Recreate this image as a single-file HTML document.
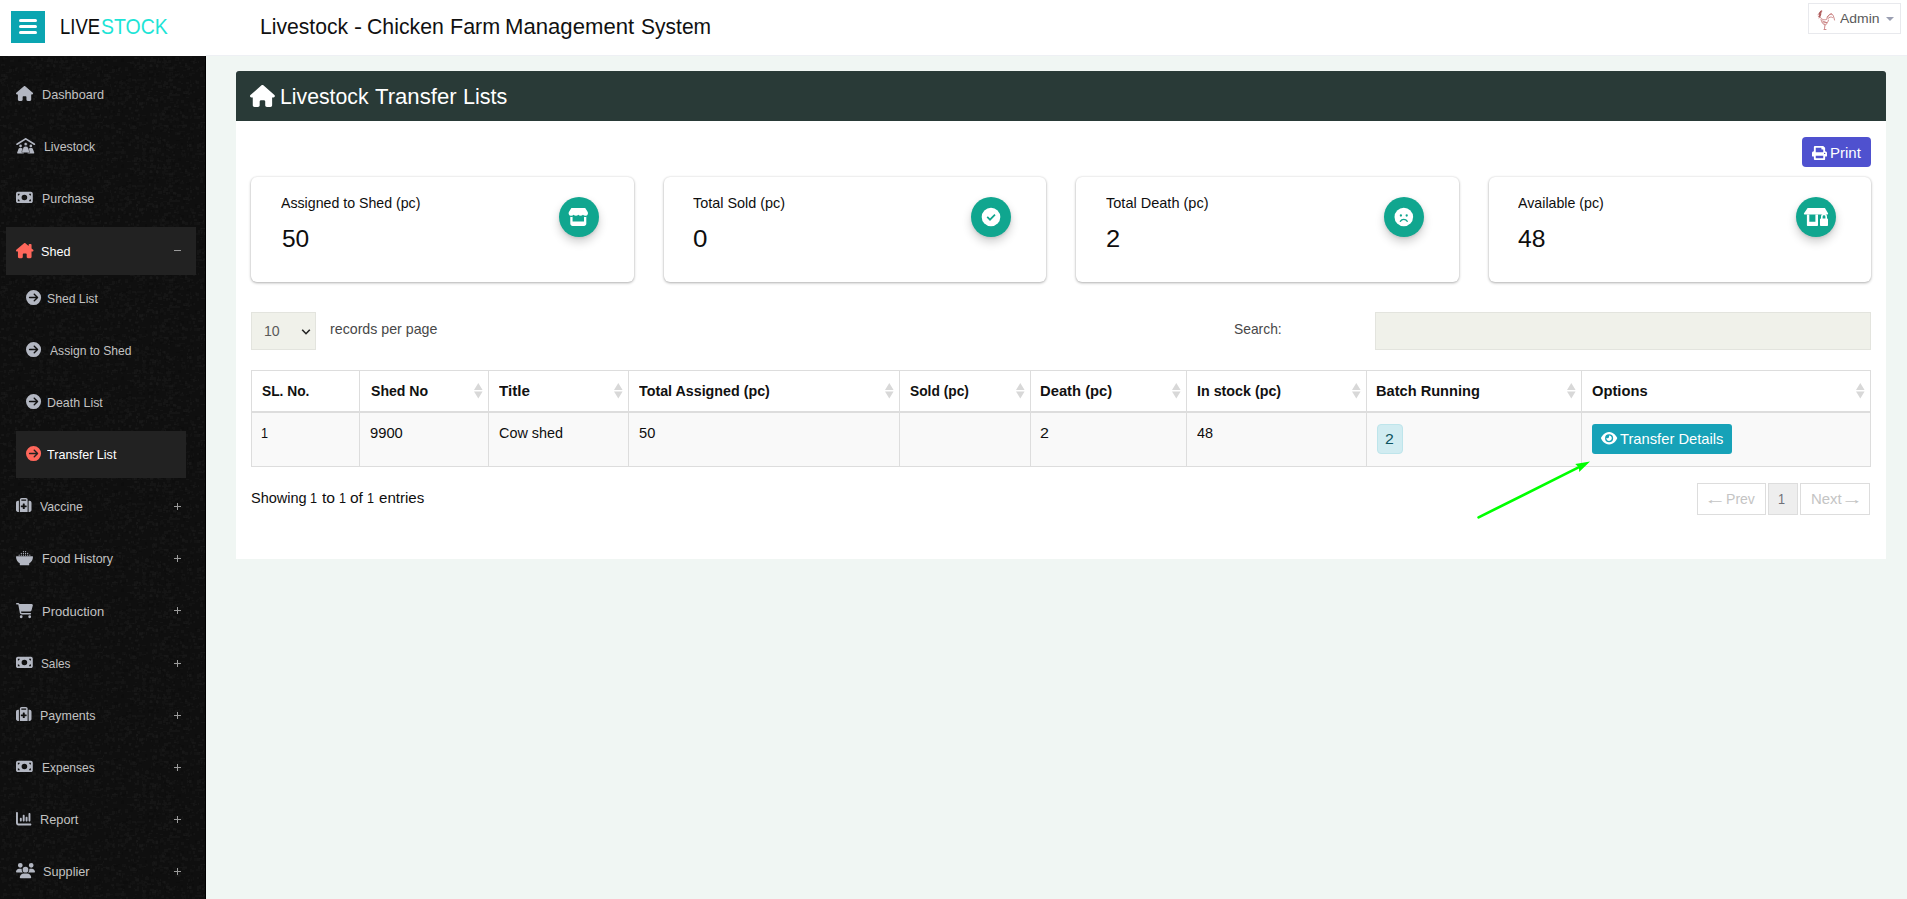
<!DOCTYPE html>
<html lang="en"><head><meta charset="utf-8"><title>Livestock - Chicken Farm Management System</title>
<style>
*{margin:0;padding:0}
html,body{width:1907px;height:899px;overflow:hidden;background:#f0f6f3;font-family:"Liberation Sans",sans-serif}
ul{list-style:none}
table,thead,tbody,tr,th,td,li,ul,nav,main,header,section,article{display:block;position:static}
.abs,.ic,.t{position:absolute;display:block}
.abs .abs{position:absolute}
.t{white-space:pre;transform-origin:0 0;line-height:20px;font-weight:400;font-family:"Liberation Sans",sans-serif}
.ic{overflow:visible}
</style></head>
<body>
<header>
<div class="abs" style="left:0px;top:0px;width:1907px;height:55px;background:#fff"></div>
<div class="abs" style="left:0px;top:55px;width:1907px;height:1px;background:#fff"></div>
<div class="abs" style="left:206px;top:55px;width:1701px;height:1px;background:#eef0f4"></div>
<div class="abs" style="left:11px;top:11px;width:34px;height:32px;background:#0ba5b1"><div class="abs" style="left:8px;top:8px;width:18px;height:3px;background:#fff;border-radius:1.5px"></div><div class="abs" style="left:8px;top:14px;width:18px;height:3px;background:#fff;border-radius:1.5px"></div><div class="abs" style="left:8px;top:20px;width:18px;height:3px;background:#fff;border-radius:1.5px"></div></div>
<div class="brand"><span class="t" style="left:60.19px;top:16.80px;font-size:21.4px;transform:scaleX(0.8627);color:#0d0d0d;">LIVE</span><span class="t" style="left:100.52px;top:16.80px;font-size:21.4px;transform:scaleX(0.9100);color:#1de4d6;">STOCK</span></div>
<h1><span class="t" style="left:259.77px;top:17.10px;font-size:21.5px;transform:scaleX(0.9831);color:#111;">Livestock</span> <span class="t" style="left:354.24px;top:17.10px;font-size:21.5px;transform:scaleX(1.1200);color:#111;">-</span> <span class="t" style="left:366.92px;top:17.10px;font-size:21.5px;transform:scaleX(0.9882);color:#111;">Chicken</span> <span class="t" style="left:449.54px;top:17.10px;font-size:21.5px;transform:scaleX(1.0005);color:#111;">Farm</span> <span class="t" style="left:504.88px;top:17.10px;font-size:21.5px;transform:scaleX(1.0294);color:#111;">Management</span> <span class="t" style="left:641.04px;top:17.10px;font-size:21.5px;transform:scaleX(0.9785);color:#111;">System</span></h1>
<div class="abs" style="left:1808px;top:3px;width:93px;height:31px;border:1px solid #e8e9ed;background:#fff;box-sizing:border-box"></div>
<svg class="ic" style="left:1815px;top:9px;width:21px;height:22px" viewBox="0 0 21 22"><g fill="none" stroke="#b04545" stroke-width="0.9" stroke-linecap="round" opacity=".7"><path d="M6.5 1.5 4.5 3.5M7 2.5 3 5.5M6 4.5 3.500 7.500M5.500 6.500 4 9"/><path stroke="#8b1a1a" stroke-width="1.6" d="M6 2.500 4.500 5M5.500 5.500 4.500 7.500"/><path d="M5.500 8.500c1.500 2.500 3.500 2.500 6 2 1-2.500 2.500-5.500 5-6 1.500 1 2.500 3.500 3 6.500M12 8c1.500-2 3-3 4.500-2.500M13 9.500c1.500-1.500 3-2 4.500-1M6 10.500c.500 3 2 5 4.500 5.500 1.500-1.500 2.500-3 3-5M7.500 12l4 1.500M8 14l3.500-.500M10 16l-.500 3.500M9 20.500h2"/></g></svg>
<span class="t" style="left:1840.17px;top:9.10px;font-size:13.4px;transform:scaleX(1.0416);color:#5a5a5a;">Admin</span>
<svg class="ic" style="left:1886px;top:17px;width:8px;height:4px" viewBox="0 0 8 4"><path fill="#9a9fb2" d="M0 0h8L4 4z"/></svg>
</header>
<nav>
<div class="abs side" style="left:0px;top:56px;width:206px;height:843px;background:#0f0f0f"></div>
<svg class="ic" style="left:0;top:56px;width:206px;height:843px" viewBox="0 0 206 843"><defs><pattern id="nz" width="103" height="106" patternUnits="userSpaceOnUse"><path fill="#fff" fill-opacity=".017" d="M57 71h3v3h-3zM65 75h2v2h-2zM102 65h3v3h-3zM101 23h1v3h-1zM38 18h1v3h-1zM88 81h1v3h-1zM50 57h4v3h-4zM83 20h3v1h-3zM67 8h1v1h-1zM24 30h3v1h-3zM99 59h2v3h-2zM75 25h3v2h-3zM81 37h3v1h-3zM84 10h3v2h-3zM52 70h1v2h-1zM40 97h2v3h-2zM36 3h1v3h-1zM98 13h3v1h-3zM37 49h1v1h-1zM87 0h2v2h-2zM6 60h3v3h-3zM53 9h3v2h-3zM99 86h2v2h-2zM11 39h2v1h-2zM52 97h1v2h-1zM31 90h1v1h-1zM7 59h3v2h-3zM87 71h2v3h-2zM65 24h4v2h-4zM53 82h3v1h-3zM50 53h2v1h-2zM34 102h3v2h-3zM2 26h2v3h-2zM77 82h3v1h-3zM5 18h2v3h-2zM33 1h3v2h-3zM37 49h1v1h-1zM11 26h3v2h-3zM1 76h2v2h-2zM79 58h2v3h-2zM61 73h2v3h-2zM23 80h2v2h-2zM29 104h3v2h-3zM92 24h2v3h-2zM25 87h3v3h-3zM77 10h3v1h-3zM13 13h1v3h-1zM32 30h4v3h-4zM32 53h3v3h-3zM37 66h2v1h-2zM16 29h3v3h-3zM83 78h3v1h-3zM35 27h2v1h-2zM8 34h3v3h-3zM31 7h1v2h-1zM36 47h3v3h-3zM16 11h2v2h-2zM57 42h4v3h-4zM74 17h3v1h-3zM2 60h2v2h-2zM4 2h3v1h-3zM61 8h4v2h-4zM40 17h1v1h-1zM57 69h2v1h-2zM94 94h4v2h-4zM101 43h2v1h-2zM87 60h1v3h-1zM101 3h3v3h-3zM1 79h4v3h-4zM48 74h1v3h-1zM9 10h1v1h-1zM32 53h4v2h-4zM49 94h4v3h-4zM58 56h3v3h-3zM10 66h3v1h-3zM39 76h1v3h-1zM2 29h4v1h-4zM63 99h3v3h-3zM32 1h2v2h-2zM18 86h3v2h-3zM66 21h2v3h-2zM63 30h2v3h-2zM85 32h2v3h-2zM102 103h2v2h-2zM49 28h3v2h-3zM26 17h2v3h-2zM44 5h4v1h-4zM35 105h2v1h-2zM57 60h2v2h-2zM52 48h4v3h-4zM63 86h2v3h-2zM57 41h1v1h-1zM35 77h1v2h-1zM73 45h2v3h-2zM2 82h2v3h-2zM58 24h1v2h-1zM30 99h2v1h-2zM80 14h3v1h-3zM80 68h4v2h-4zM9 87h2v2h-2zM60 32h2v1h-2zM96 60h3v1h-3zM22 28h2v2h-2zM69 89h3v3h-3zM78 96h2v3h-2zM101 89h2v1h-2zM52 92h3v2h-3zM57 58h2v1h-2zM48 70h3v3h-3zM101 104h2v3h-2zM41 83h2v1h-2zM92 104h4v1h-4zM27 31h3v1h-3zM39 68h2v2h-2zM91 2h2v3h-2zM10 4h3v2h-3zM70 53h2v3h-2zM3 27h1v3h-1zM102 4h2v3h-2zM42 87h2v3h-2zM19 66h4v3h-4zM86 88h3v3h-3zM74 88h1v2h-1zM56 67h3v2h-3zM93 71h4v2h-4zM66 65h3v2h-3zM39 85h3v3h-3zM26 38h2v3h-2zM67 34h3v3h-3zM25 52h3v1h-3zM64 0h3v3h-3zM3 68h1v3h-1zM51 69h3v1h-3zM62 11h4v2h-4zM8 68h3v3h-3zM102 51h2v2h-2zM60 63h2v2h-2zM55 104h3v3h-3zM40 13h2v3h-2zM79 3h2v2h-2zM89 99h1v1h-1zM24 19h2v1h-2zM87 36h2v2h-2zM31 79h3v1h-3zM63 93h3v1h-3zM65 79h2v2h-2zM89 67h3v1h-3zM48 81h3v3h-3zM78 20h3v2h-3zM80 68h4v2h-4zM67 27h3v3h-3zM75 17h2v2h-2zM23 40h3v2h-3zM24 27h2v1h-2zM17 30h2v1h-2zM33 49h1v3h-1zM53 69h4v2h-4zM25 51h4v1h-4zM12 25h3v2h-3zM46 14h4v3h-4zM81 97h2v3h-2zM87 24h1v3h-1zM13 3h1v3h-1zM78 65h3v3h-3zM18 24h2v1h-2zM26 22h2v2h-2zM86 12h3v1h-3zM17 87h3v1h-3zM97 12h2v3h-2zM59 54h3v2h-3zM55 26h3v2h-3zM1 81h4v1h-4zM25 23h3v3h-3zM46 94h2v3h-2zM24 77h2v1h-2zM65 101h1v2h-1zM10 102h4v3h-4zM72 76h2v3h-2zM74 43h2v2h-2zM14 95h4v2h-4zM51 17h2v3h-2zM88 47h3v2h-3zM51 26h4v2h-4zM9 102h2v2h-2zM60 12h1v2h-1zM81 79h1v2h-1zM34 85h2v2h-2zM27 84h3v3h-3zM23 68h1v3h-1zM65 63h4v2h-4zM89 15h3v3h-3zM2 14h3v1h-3zM94 30h2v3h-2zM51 64h1v2h-1zM82 48h1v1h-1zM33 32h2v2h-2zM70 69h3v3h-3zM66 72h1v3h-1zM82 9h3v3h-3zM85 97h1v3h-1zM20 49h3v2h-3zM63 69h3v3h-3zM7 54h3v3h-3zM36 67h3v3h-3zM39 46h3v2h-3zM61 83h2v3h-2zM36 84h4v2h-4zM3 1h2v3h-2zM5 81h2v3h-2zM96 87h3v1h-3zM40 95h3v1h-3zM74 92h2v1h-2zM102 28h3v3h-3zM32 96h2v1h-2zM66 12h4v3h-4zM18 104h2v3h-2zM90 14h1v3h-1zM53 58h1v2h-1zM6 45h3v2h-3zM15 46h3v2h-3zM85 53h3v3h-3zM33 81h3v3h-3zM46 99h4v3h-4zM17 37h4v2h-4zM30 61h1v3h-1zM39 100h3v3h-3zM45 35h2v3h-2zM87 92h3v3h-3zM24 81h2v2h-2zM24 31h3v2h-3zM87 5h4v1h-4zM1 34h2v3h-2zM3 79h1v1h-1zM28 69h2v1h-2zM96 11h4v2h-4zM70 30h4v2h-4zM61 61h2v2h-2zM43 43h3v2h-3zM9 102h1v3h-1zM79 98h2v3h-2zM54 95h2v3h-2zM19 47h2v3h-2zM41 37h3v2h-3zM54 83h2v3h-2zM12 59h2v1h-2zM69 10h3v3h-3zM72 62h4v3h-4zM38 105h1v1h-1zM39 27h4v3h-4zM10 88h2v3h-2zM92 97h4v2h-4zM36 18h2v2h-2zM84 92h2v2h-2zM15 41h4v3h-4zM72 76h4v2h-4zM56 67h2v3h-2zM40 28h3v3h-3zM31 10h2v2h-2zM3 46h4v3h-4zM74 49h2v3h-2zM47 102h3v3h-3zM19 75h3v2h-3zM22 11h3v2h-3zM2 28h3v1h-3zM69 20h3v2h-3zM2 83h3v1h-3zM74 69h2v3h-2zM10 42h1v2h-1zM94 13h2v1h-2zM3 81h4v2h-4zM12 95h4v3h-4zM31 91h2v3h-2zM97 66h2v3h-2zM50 44h2v2h-2zM86 17h3v3h-3zM68 103h4v1h-4zM90 79h1v3h-1zM96 105h4v2h-4zM0 103h3v1h-3zM59 69h4v1h-4zM67 46h4v1h-4zM102 14h3v3h-3zM18 31h4v2h-4zM81 48h4v2h-4zM41 26h3v3h-3zM67 37h2v1h-2zM60 39h4v1h-4zM38 82h2v2h-2zM7 96h3v1h-3zM74 61h1v2h-1zM13 25h2v2h-2zM27 75h2v3h-2zM91 60h3v3h-3zM28 56h2v2h-2zM51 22h2v3h-2zM70 61h2v3h-2zM51 43h4v3h-4zM98 11h3v2h-3zM51 6h2v2h-2zM102 102h3v3h-3zM101 66h2v1h-2zM84 30h1v3h-1zM47 57h2v3h-2zM77 20h3v2h-3zM98 41h2v2h-2zM66 16h4v3h-4zM34 66h3v1h-3zM19 73h2v1h-2zM26 105h2v2h-2zM10 45h2v3h-2zM91 67h1v3h-1zM88 59h1v3h-1zM69 64h2v1h-2zM101 24h3v2h-3zM87 11h3v2h-3zM4 69h3v3h-3zM63 20h2v2h-2zM39 51h1v3h-1zM39 59h4v1h-4zM46 9h4v2h-4zM13 85h3v3h-3zM95 100h1v3h-1zM1 48h4v3h-4zM30 37h3v1h-3zM58 98h1v2h-1zM78 19h2v3h-2zM69 95h2v2h-2zM96 50h3v1h-3zM32 24h2v3h-2zM93 14h2v2h-2zM35 72h3v2h-3zM57 105h3v1h-3zM13 18h3v1h-3zM16 86h4v2h-4zM23 24h3v1h-3zM59 75h4v1h-4zM12 29h1v2h-1zM15 55h3v1h-3zM43 105h3v3h-3zM17 82h2v2h-2zM88 49h3v2h-3zM52 79h1v3h-1zM78 89h2v2h-2zM84 77h3v1h-3zM33 42h2v2h-2zM39 83h3v1h-3zM71 48h2v3h-2zM42 100h2v1h-2zM78 91h2v2h-2zM98 68h2v3h-2zM29 45h3v3h-3zM65 18h3v2h-3zM66 91h4v2h-4zM72 3h4v2h-4zM99 10h2v2h-2zM61 73h3v2h-3zM42 11h2v2h-2zM59 15h3v2h-3zM30 72h3v3h-3zM71 8h3v2h-3zM21 95h2v3h-2zM18 15h1v2h-1zM87 46h2v3h-2zM46 21h2v3h-2zM70 103h1v3h-1zM4 51h2v2h-2zM39 96h4v3h-4zM78 75h4v1h-4zM20 25h3v3h-3zM4 18h3v3h-3zM15 72h3v2h-3zM43 66h2v2h-2zM31 72h2v1h-2zM82 100h1v2h-1zM51 63h3v1h-3zM60 44h3v3h-3zM88 72h3v2h-3zM62 59h4v3h-4zM55 15h3v1h-3zM67 42h3v3h-3zM55 53h1v2h-1zM6 37h4v3h-4zM55 93h3v3h-3zM41 96h2v3h-2zM8 31h1v3h-1zM31 64h3v1h-3zM60 88h1v3h-1zM30 69h2v3h-2zM30 8h4v2h-4zM69 53h3v2h-3zM28 83h4v3h-4zM72 15h1v1h-1zM66 101h2v1h-2zM68 73h3v1h-3zM37 31h4v2h-4zM3 41h2v1h-2zM56 57h3v3h-3zM18 45h4v3h-4zM29 5h2v1h-2zM58 40h2v2h-2zM63 18h3v2h-3zM25 37h4v1h-4zM25 40h2v3h-2zM2 22h4v3h-4zM25 68h4v2h-4zM24 6h4v1h-4zM39 92h2v2h-2zM53 91h2v2h-2zM89 99h3v3h-3zM10 21h2v2h-2zM15 90h4v2h-4zM34 23h4v2h-4zM64 85h2v2h-2zM47 102h4v3h-4zM14 75h3v2h-3zM38 23h4v2h-4zM35 16h4v1h-4zM59 9h3v3h-3zM9 67h1v1h-1zM76 75h2v3h-2z"/><path fill="#fff" fill-opacity=".024" d="M32 54h3v1h-3zM21 36h2v2h-2zM22 35h4v3h-4zM3 23h2v1h-2zM79 59h3v3h-3zM0 63h1v2h-1zM8 71h4v2h-4zM41 84h3v1h-3zM66 37h3v3h-3zM95 68h2v3h-2zM99 98h2v1h-2zM77 55h2v3h-2zM70 98h2v2h-2zM33 62h3v2h-3zM74 77h3v2h-3zM4 25h3v1h-3zM73 57h2v2h-2zM19 77h1v3h-1zM63 103h3v3h-3zM56 92h2v1h-2zM9 14h2v3h-2zM81 69h3v2h-3zM79 18h1v2h-1zM54 5h4v2h-4zM79 94h3v2h-3zM97 75h3v1h-3zM83 105h3v2h-3zM48 32h2v2h-2zM63 88h4v3h-4zM100 58h1v2h-1zM52 59h2v2h-2zM90 5h2v3h-2zM96 97h3v2h-3zM18 95h3v3h-3zM95 5h1v2h-1zM52 67h2v1h-2zM50 71h2v3h-2zM54 9h1v3h-1zM29 37h2v1h-2zM70 30h3v3h-3zM11 29h2v2h-2zM43 78h2v1h-2zM20 51h3v1h-3zM94 43h3v3h-3zM22 59h3v2h-3zM48 48h1v2h-1zM53 44h2v2h-2zM101 70h2v3h-2zM26 51h2v3h-2zM59 97h2v3h-2zM57 62h4v2h-4zM62 26h3v3h-3zM53 9h1v2h-1zM46 35h3v1h-3zM66 23h4v2h-4zM65 50h3v2h-3zM34 13h2v1h-2zM19 93h2v2h-2zM98 30h4v1h-4zM2 41h3v3h-3zM10 48h2v2h-2zM98 66h4v1h-4zM38 50h3v2h-3zM62 5h2v2h-2zM65 76h2v1h-2zM26 39h3v3h-3zM61 69h4v2h-4zM66 90h3v2h-3zM40 92h3v3h-3zM18 26h2v3h-2zM91 57h3v2h-3zM49 66h2v2h-2zM13 37h2v2h-2zM78 27h2v1h-2zM3 95h4v3h-4zM72 1h4v2h-4zM84 85h1v2h-1zM71 88h2v1h-2zM99 47h2v2h-2zM11 102h3v1h-3zM50 63h1v3h-1zM49 42h2v3h-2zM90 35h2v2h-2zM51 25h3v2h-3zM44 85h4v2h-4zM66 11h4v2h-4zM54 102h2v3h-2zM74 32h4v3h-4zM39 89h1v3h-1zM15 46h1v3h-1zM34 6h3v3h-3zM74 38h3v2h-3zM32 9h1v1h-1zM44 41h2v3h-2zM38 33h4v2h-4zM82 60h3v3h-3zM43 46h1v3h-1zM90 27h1v1h-1zM79 69h3v3h-3zM53 8h2v1h-2zM59 57h3v3h-3zM4 102h2v3h-2zM34 39h3v2h-3zM60 2h2v3h-2zM24 34h2v2h-2zM87 28h2v3h-2zM0 69h3v1h-3zM30 70h3v3h-3zM10 79h3v2h-3zM33 44h1v1h-1zM40 103h4v2h-4zM89 50h4v2h-4zM24 105h2v2h-2zM42 79h4v3h-4zM72 37h2v3h-2zM36 46h4v3h-4zM63 30h4v2h-4zM46 41h4v2h-4zM65 94h2v1h-2zM8 104h1v2h-1zM14 57h3v3h-3zM5 20h3v3h-3zM61 6h2v2h-2zM50 64h4v3h-4zM32 91h4v2h-4zM47 91h4v2h-4zM23 42h2v3h-2zM16 72h3v2h-3zM79 94h2v2h-2zM16 25h3v3h-3zM85 37h2v2h-2zM1 60h3v2h-3zM34 88h2v3h-2zM32 80h4v3h-4zM49 86h2v1h-2zM20 91h1v1h-1zM24 36h2v3h-2zM102 15h3v2h-3zM3 69h3v2h-3zM47 8h2v3h-2zM102 83h2v2h-2zM50 92h3v3h-3zM97 18h3v3h-3zM86 88h2v3h-2zM36 102h2v3h-2zM22 13h3v2h-3zM62 55h1v2h-1zM41 2h2v3h-2zM72 18h2v3h-2zM35 41h2v1h-2zM61 25h2v3h-2zM33 71h1v2h-1zM8 0h2v1h-2zM0 23h2v3h-2zM17 100h2v3h-2zM61 4h3v2h-3zM71 50h3v1h-3zM27 70h3v3h-3zM32 35h2v2h-2zM31 103h3v3h-3zM92 6h2v1h-2zM21 68h1v1h-1zM34 45h1v3h-1zM39 8h3v3h-3zM1 26h1v2h-1zM1 98h3v2h-3zM31 101h4v3h-4zM51 39h3v1h-3zM61 51h4v3h-4zM32 79h1v1h-1zM73 18h2v2h-2zM49 92h2v3h-2zM84 35h2v3h-2zM45 39h2v1h-2zM83 41h3v1h-3zM33 42h2v2h-2zM27 6h4v2h-4zM69 38h4v2h-4zM22 44h1v2h-1zM18 47h2v2h-2zM55 2h1v3h-1zM64 6h3v1h-3zM41 68h2v1h-2zM22 41h1v3h-1zM13 74h2v3h-2zM60 28h3v3h-3zM99 90h2v2h-2zM8 86h3v2h-3zM23 99h2v3h-2zM1 18h4v3h-4zM82 7h2v3h-2zM78 44h3v3h-3zM64 72h1v1h-1zM94 88h4v3h-4zM55 85h3v3h-3zM49 64h2v3h-2zM76 69h3v1h-3zM65 4h3v3h-3zM57 36h3v1h-3zM76 6h2v2h-2zM68 59h2v2h-2zM94 79h2v2h-2zM94 60h3v3h-3zM6 16h3v1h-3zM29 23h4v2h-4zM14 102h1v3h-1zM32 33h1v2h-1zM4 91h2v2h-2zM66 103h2v3h-2zM26 68h1v3h-1zM25 62h2v2h-2zM9 13h3v3h-3zM100 96h3v2h-3zM9 102h3v1h-3zM98 70h1v2h-1zM46 22h1v2h-1zM4 44h2v2h-2zM15 53h2v3h-2zM49 3h4v3h-4zM59 62h1v1h-1zM83 26h3v2h-3zM93 25h3v3h-3zM48 1h2v2h-2zM80 35h4v3h-4zM26 88h2v2h-2zM98 16h2v3h-2zM59 5h2v2h-2zM14 33h2v3h-2zM79 45h2v2h-2zM1 8h4v2h-4zM94 91h2v2h-2zM98 52h2v2h-2zM9 80h2v3h-2zM47 104h3v3h-3zM35 58h2v3h-2zM15 12h2v3h-2zM90 53h2v3h-2zM74 15h2v1h-2zM36 10h4v3h-4zM28 61h3v2h-3zM95 52h3v2h-3zM57 81h1v2h-1zM53 42h2v3h-2zM56 84h2v2h-2zM84 88h1v3h-1zM31 1h3v2h-3zM16 75h2v3h-2zM53 35h2v1h-2zM98 75h1v3h-1zM84 12h3v2h-3zM11 101h2v1h-2zM47 3h4v3h-4zM85 89h2v1h-2zM85 81h2v3h-2zM9 46h2v3h-2zM64 40h3v3h-3zM7 28h1v3h-1zM55 29h4v3h-4zM89 14h1v1h-1zM59 83h3v2h-3z"/><path fill="#000" fill-opacity=".13" d="M66 74h2v3h-2zM47 18h3v3h-3zM12 94h1v1h-1zM21 83h4v3h-4zM100 94h2v3h-2zM99 15h3v3h-3zM19 2h2v2h-2zM3 13h2v3h-2zM68 71h3v1h-3zM99 101h1v2h-1zM64 72h1v1h-1zM72 30h2v1h-2zM65 65h2v2h-2zM45 99h2v2h-2zM75 52h3v1h-3zM27 75h3v2h-3zM71 13h3v2h-3zM13 103h3v2h-3zM18 72h3v2h-3zM52 79h3v1h-3zM52 105h1v2h-1zM19 102h1v3h-1zM20 37h3v3h-3zM3 51h1v3h-1zM38 69h4v1h-4zM49 53h2v1h-2zM27 33h3v1h-3zM84 53h2v3h-2zM26 83h3v2h-3zM72 64h1v3h-1zM80 38h2v3h-2zM33 28h2v1h-2zM54 101h3v3h-3zM45 83h3v2h-3zM57 14h1v2h-1zM67 7h2v3h-2zM48 70h2v3h-2zM28 86h1v2h-1zM4 40h2v3h-2zM29 66h4v3h-4zM62 93h1v2h-1zM52 75h1v1h-1zM88 75h2v2h-2zM46 76h4v2h-4zM38 26h3v3h-3zM7 40h2v3h-2zM15 66h2v1h-2zM11 27h2v3h-2zM34 103h3v2h-3zM51 11h2v3h-2zM87 12h1v3h-1zM28 32h2v1h-2zM40 19h2v2h-2zM82 36h1v3h-1zM6 50h3v1h-3zM70 17h2v1h-2zM78 87h2v3h-2zM69 0h4v3h-4zM53 42h4v1h-4zM22 100h1v3h-1zM87 96h2v3h-2zM96 57h4v3h-4zM102 15h3v2h-3zM94 93h1v1h-1zM45 85h3v1h-3zM89 15h3v2h-3zM88 83h3v1h-3zM27 12h3v2h-3zM68 17h1v2h-1zM35 60h3v1h-3zM55 48h2v3h-2zM63 55h4v3h-4zM65 99h3v1h-3zM70 95h2v3h-2zM41 25h1v2h-1zM20 83h2v3h-2zM75 102h3v3h-3zM57 73h3v3h-3zM45 98h3v2h-3zM61 90h3v2h-3zM11 89h3v2h-3zM80 33h2v3h-2zM73 5h2v1h-2zM102 105h2v3h-2zM31 91h2v3h-2zM79 8h3v2h-3zM52 67h3v3h-3zM62 15h2v2h-2zM96 79h1v2h-1zM64 19h1v2h-1zM72 20h3v3h-3zM42 62h2v3h-2zM97 45h2v1h-2zM31 100h2v2h-2zM25 68h4v3h-4zM44 15h2v2h-2zM74 21h2v2h-2zM46 13h4v2h-4zM77 93h2v1h-2zM31 45h1v2h-1zM68 32h4v2h-4zM36 32h3v2h-3zM33 62h1v2h-1zM3 36h2v3h-2zM19 49h2v3h-2zM16 78h1v3h-1zM102 93h2v3h-2zM96 84h4v3h-4zM99 81h2v2h-2zM6 54h2v3h-2zM29 61h3v2h-3zM44 93h2v3h-2zM34 72h4v2h-4zM29 9h3v1h-3zM73 84h4v1h-4zM38 0h1v3h-1zM15 24h2v2h-2zM45 18h1v1h-1zM18 3h3v3h-3zM18 87h3v3h-3zM9 55h3v2h-3zM11 67h4v2h-4zM78 63h2v1h-2zM53 17h3v2h-3zM10 88h3v1h-3zM71 71h1v2h-1zM38 32h2v2h-2zM89 34h2v3h-2zM19 54h1v3h-1zM62 101h3v3h-3zM78 78h2v2h-2zM11 98h3v2h-3zM4 13h1v2h-1zM38 3h3v1h-3zM19 23h4v3h-4zM66 74h4v1h-4zM0 47h1v2h-1zM50 29h3v2h-3zM42 28h2v3h-2zM1 98h2v2h-2zM6 74h2v3h-2zM92 42h3v2h-3zM58 83h2v3h-2zM22 25h2v2h-2zM32 57h3v2h-3zM100 42h2v2h-2zM86 83h3v2h-3zM76 66h3v2h-3zM73 2h2v2h-2zM29 8h2v3h-2zM42 94h4v2h-4zM86 4h2v3h-2zM11 10h4v3h-4zM31 56h2v1h-2zM53 71h2v2h-2zM85 45h1v1h-1zM49 17h3v2h-3zM43 101h2v3h-2zM36 71h3v1h-3zM60 104h1v1h-1zM63 4h3v1h-3zM54 20h2v1h-2zM26 20h3v2h-3zM40 43h2v2h-2zM18 102h4v2h-4zM5 24h2v2h-2zM89 86h2v3h-2zM47 47h4v1h-4zM34 18h1v2h-1zM92 44h4v1h-4zM15 39h2v2h-2zM74 15h2v3h-2zM66 69h3v3h-3zM97 102h3v2h-3zM11 10h4v2h-4zM2 9h2v3h-2zM23 20h2v3h-2zM13 37h3v3h-3zM58 44h3v3h-3zM59 4h2v2h-2zM60 86h1v3h-1zM97 74h3v3h-3zM6 36h2v1h-2zM22 51h4v2h-4zM2 3h2v3h-2zM102 63h3v1h-3zM59 3h2v2h-2zM1 21h2v1h-2zM43 33h3v3h-3zM47 88h3v2h-3zM79 95h2v2h-2zM45 18h3v3h-3zM78 53h3v3h-3zM75 58h2v2h-2zM62 29h4v3h-4zM84 20h3v3h-3zM71 36h2v2h-2zM30 71h3v3h-3zM20 89h2v2h-2zM81 12h4v1h-4z"/></pattern></defs><rect width="206" height="843" fill="url(#nz)"/><rect x="205" width="1" height="843" fill="#000"/></svg>
<div class="abs" style="left:6px;top:227px;width:190px;height:48px;background:#222222"></div>
<div class="abs" style="left:16px;top:431px;width:170px;height:47px;background:#222222"></div>
<ul>
<li><svg class="ic" style="left:15.6px;top:85.8px;width:17.1px;height:15.0px" viewBox="0 0 576 512" preserveAspectRatio="none" ><path fill="#b3b7c2" d="M575.8 255.5c0 18-15 32.1-32 32.1h-32l.7 160.2c0 2.7-.2 5.4-.5 8.1V472c0 22.1-17.9 40-40 40H456c-1.1 0-2.2 0-3.3-.1c-1.4 .1-2.8 .1-4.2 .1H416 392c-22.1 0-40-17.9-40-40V448 384c0-17.7-14.3-32-32-32H256c-17.7 0-32 14.3-32 32v64 24c0 22.1-17.9 40-40 40H160 128.1c-1.5 0-3-.1-4.5-.2c-1.200 .1-2.400 .2-3.600 .2H104c-22.100 0-40-17.900-40-40V360c0-.9 0-1.900 .1-2.800V287.600H32c-18 0-32-14-32-32.100c0-9 3-17 10-24L266.400 8c7-7 15-8 22-8s15 2 21 7L564.800 231.500c8 7 12 15 11 24z"/></svg><span class="t" style="left:41.76px;top:85.10px;font-size:12.2px;transform:scaleX(1.0409);color:#c2c2c2;">Dashboard</span></li>
<li><svg class="ic" style="left:15.8px;top:137.6px;width:19.4px;height:15.5px" viewBox="0 0 640 512"><g fill="#b3b7c2"><path d="M320 0c7 0 14 2 20 6l282 176c13 8 17 25 9 38s-25 17-38 9L320 58 47 229c-13 8-30 4-38-9s-4-30 9-38L300 6c6-4 13-6 20-6z"/><circle cx="150" cy="262" r="44"/><circle cx="490" cy="262" r="44"/><path d="M150 326c-38 0-66 26-77 60L36 486c-4 13 5 26 19 26h190c14 0 23-13 19-26l-37-100c-11-34-39-60-77-60zM490 326c-38 0-66 26-77 60l-37 100c-4 13 5 26 19 26h190c14 0 23-13 19-26l-37-100c-11-34-39-60-77-60z"/><circle cx="320" cy="200" r="54" stroke="#0b0b0b" stroke-width="14"/><path stroke="#0b0b0b" stroke-width="14" d="M320 270c-45 0-78 30-90 70l-40 118c-5 14 6 30 21 30h218c15 0 26-16 21-30l-40-118c-12-40-45-70-90-70z"/></g></svg><span class="t" style="left:43.59px;top:137.20px;font-size:12.2px;transform:scaleX(1.0076);color:#c2c2c2;">Livestock</span></li>
<li><svg class="ic" style="left:16.0px;top:190.1px;width:16.8px;height:14.93px" viewBox="0 0 576 512" preserveAspectRatio="none" ><path fill="#b3b7c2" d="M64 64C28.700 64 0 92.700 0 128V384c0 35.300 28.700 64 64 64H512c35.300 0 64-28.700 64-64V128c0-35.300-28.700-64-64-64H64zm64 320H64V320c35.300 0 64 28.700 64 64zM64 192V128h64c0 35.300-28.700 64-64 64zM448 384c0-35.300 28.700-64 64-64v64H448zm64-192c-35.300 0-64-28.700-64-64h64v64zM288 160a96 96 0 1 1 0 192 96 96 0 1 1 0-192z"/></svg><span class="t" style="left:41.78px;top:188.90px;font-size:12.2px;transform:scaleX(1.0151);color:#c2c2c2;">Purchase</span></li>
<li><svg class="ic" style="left:15.9px;top:242.7px;width:17.5px;height:15.2px" viewBox="0 0 576 512" preserveAspectRatio="none" ><path fill="#ff675b" d="M543.8 287.6c17 0 32-14 32-32.1c1-9-3-17-11-24L512 185V64c0-17.7-14.3-32-32-32H448c-17.7 0-32 14.3-32 32v36.700L309.500 7c-6-5-14-7-21-7s-15 1-22 8L10 231.500c-7 7-10 15-10 24c0 18 14 32.100 32 32.100h32v69.700c-.1 .9-.1 1.800-.1 2.800V472c0 22.100 17.900 40 40 40h16c1.200 0 2.400-.1 3.600-.2c1.500 .1 3 .2 4.500 .2H160h24c22.100 0 40-17.900 40-40V448 384c0-17.700 14.300-32 32-32h64c17.700 0 32 14.300 32 32v64 24c0 22.100 17.900 40 40 40h24 32.500c1.400 0 2.800 0 4.200-.1c1.100 .1 2.200 .1 3.300 .1h16c22.100 0 40-17.900 40-40V455.800c.3-2.600 .5-5.300 .5-8.100l-.7-160.200h32z"/></svg><span class="t" style="left:41.43px;top:241.70px;font-size:12.2px;transform:scaleX(1.0323);color:#fff;">Shed</span><svg class="ic" style="left:173px;top:246.0px;width:9px;height:9px" viewBox="0 0 9 9"><path stroke="#9b9b9b" stroke-width="1" fill="none" d="M1 4.500h7"/></svg></li>
<li><ul>
<li><svg class="ic" style="left:26.0px;top:289.75px;width:15.1px;height:15.1px" viewBox="0 0 512 512" preserveAspectRatio="none" ><path fill="#b3b7c2" d="M0 256a256 256 0 1 0 512 0A256 256 0 1 0 0 256zM297 385c-9.400 9.400-24.600 9.400-33.900 0s-9.400-24.600 0-33.900l71-71L120 280c-13.300 0-24-10.700-24-24s10.700-24 24-24l214.100 0-71-71c-9.400-9.400-9.400-24.600 0-33.900s24.600-9.400 33.900 0L409 239c9.400 9.400 9.400 24.600 0 33.900L297 385z"/></svg><span class="t" style="left:47.05px;top:289.00px;font-size:12.2px;transform:scaleX(1.0006);color:#c2c2c2;">Shed List</span></li>
<li><svg class="ic" style="left:26.0px;top:341.75px;width:15.1px;height:15.1px" viewBox="0 0 512 512" preserveAspectRatio="none" ><path fill="#b3b7c2" d="M0 256a256 256 0 1 0 512 0A256 256 0 1 0 0 256zM297 385c-9.400 9.400-24.600 9.400-33.900 0s-9.400-24.600 0-33.900l71-71L120 280c-13.300 0-24-10.700-24-24s10.700-24 24-24l214.100 0-71-71c-9.400-9.400-9.400-24.600 0-33.900s24.600-9.400 33.900 0L409 239c9.400 9.400 9.400 24.600 0 33.900L297 385z"/></svg><span class="t" style="left:49.98px;top:340.80px;font-size:12.2px;transform:scaleX(0.9942);color:#c2c2c2;">Assign to Shed</span></li>
<li><svg class="ic" style="left:26.0px;top:393.84999999999997px;width:15.1px;height:15.1px" viewBox="0 0 512 512" preserveAspectRatio="none" ><path fill="#b3b7c2" d="M0 256a256 256 0 1 0 512 0A256 256 0 1 0 0 256zM297 385c-9.400 9.400-24.600 9.400-33.900 0s-9.400-24.600 0-33.900l71-71L120 280c-13.300 0-24-10.700-24-24s10.700-24 24-24l214.100 0-71-71c-9.400-9.400-9.400-24.600 0-33.900s24.600-9.400 33.900 0L409 239c9.400 9.400 9.400 24.600 0 33.900L297 385z"/></svg><span class="t" style="left:47.28px;top:393.00px;font-size:12.2px;transform:scaleX(1.0170);color:#c2c2c2;">Death List</span></li>
<li><svg class="ic" style="left:26.0px;top:445.84999999999997px;width:15.1px;height:15.1px" viewBox="0 0 512 512" preserveAspectRatio="none" ><path fill="#ff675b" d="M0 256a256 256 0 1 0 512 0A256 256 0 1 0 0 256zM297 385c-9.400 9.400-24.600 9.400-33.900 0s-9.400-24.600 0-33.900l71-71L120 280c-13.300 0-24-10.700-24-24s10.700-24 24-24l214.100 0-71-71c-9.400-9.400-9.400-24.600 0-33.900s24.600-9.400 33.900 0L409 239c9.400 9.400 9.400 24.600 0 33.900L297 385z"/></svg><span class="t" style="left:46.72px;top:444.80px;font-size:12.2px;transform:scaleX(1.0312);color:#fff;">Transfer List</span></li>
</ul></li>
<li><svg class="ic" style="left:15.8px;top:498.0px;width:15.5px;height:13.9px" viewBox="0 0 512 480" preserveAspectRatio="none" ><path fill="#b3b7c2" d="M184 48H328c4.400 0 8 3.600 8 8V96H176V56c0-4.400 3.600-8 8-8zm-56 8V96v32V480H384V128 96 56c0-30.900-25.100-56-56-56H184c-30.900 0-56 25.100-56 56zM96 96H64C28.700 96 0 124.700 0 160V416c0 35.300 28.700 64 64 64H96V96zM416 480h32c35.300 0 64-28.700 64-64V160c0-35.300-28.700-64-64-64H416V480zM224 208c0-8.800 7.200-16 16-16h32c8.800 0 16 7.200 16 16v48h48c8.800 0 16 7.200 16 16v32c0 8.800-7.200 16-16 16H288v48c0 8.800-7.200 16-16 16H240c-8.800 0-16-7.200-16-16V320H176c-8.800 0-16-7.200-16-16V272c0-8.800 7.200-16 16-16h48V208z"/></svg><span class="t" style="left:39.95px;top:497.00px;font-size:12.2px;transform:scaleX(1.0082);color:#c2c2c2;">Vaccine</span><svg class="ic" style="left:173px;top:501.9px;width:9px;height:9px" viewBox="0 0 9 9"><path stroke="#9b9b9b" stroke-width="1" fill="none" d="M1 4.500h7M4.500 1v7"/></svg></li>
<li><svg class="ic" style="left:16px;top:550.8px;width:17px;height:14.3px" viewBox="0 0 512 430"><g fill="#b3b7c2"><path d="M0 176c0-9 7-16 16-16h480c9 0 16 7 16 16 0 88-47 160-114 196v42c0 9-7 16-16 16H130c-9 0-16-7-16-16v-42C47 336 0 264 0 176z"/><circle cx="224" cy="18" r="18"/><circle cx="288" cy="18" r="18"/><circle cx="160" cy="72" r="18"/><circle cx="224" cy="72" r="18"/><circle cx="288" cy="72" r="18"/><circle cx="352" cy="72" r="18"/><circle cx="96" cy="126" r="18"/><circle cx="160" cy="126" r="18"/><circle cx="224" cy="126" r="18"/><circle cx="288" cy="126" r="18"/><circle cx="352" cy="126" r="18"/><circle cx="416" cy="126" r="18"/></g></svg><span class="t" style="left:41.77px;top:549.00px;font-size:12.2px;transform:scaleX(1.0285);color:#c2c2c2;">Food History</span><svg class="ic" style="left:173px;top:554.1px;width:9px;height:9px" viewBox="0 0 9 9"><path stroke="#9b9b9b" stroke-width="1" fill="none" d="M1 4.500h7M4.500 1v7"/></svg></li>
<li><svg class="ic" style="left:16.0px;top:602.8px;width:17.0px;height:15.2px" viewBox="0 0 576 512" preserveAspectRatio="none" ><path fill="#b3b7c2" d="M0 24C0 10.700 10.700 0 24 0H69.500c22 0 41.500 12.800 50.600 32h411c26.300 0 45.500 25 38.600 50.400l-41 152.300c-8.500 31.400-37 53.300-69.500 53.300H170.700l5.400 28.500c2.200 11.300 12.100 19.500 23.600 19.500H488c13.300 0 24 10.700 24 24s-10.700 24-24 24H199.700c-34.600 0-64.300-24.600-70.700-58.500L77.400 54.500c-.7-3.800-4-6.500-7.900-6.500H24C10.700 48 0 37.300 0 24zM128 464a48 48 0 1 1 96 0 48 48 0 1 1 -96 0zm336-48a48 48 0 1 1 0 96 48 48 0 1 1 0-96z"/></svg><span class="t" style="left:41.73px;top:602.00px;font-size:12.2px;transform:scaleX(1.0660);color:#c2c2c2;">Production</span><svg class="ic" style="left:173px;top:606.3px;width:9px;height:9px" viewBox="0 0 9 9"><path stroke="#9b9b9b" stroke-width="1" fill="none" d="M1 4.500h7M4.500 1v7"/></svg></li>
<li><svg class="ic" style="left:16.0px;top:655.1px;width:16.8px;height:14.93px" viewBox="0 0 576 512" preserveAspectRatio="none" ><path fill="#b3b7c2" d="M64 64C28.700 64 0 92.700 0 128V384c0 35.300 28.700 64 64 64H512c35.300 0 64-28.700 64-64V128c0-35.300-28.700-64-64-64H64zm64 320H64V320c35.300 0 64 28.700 64 64zM64 192V128h64c0 35.300-28.700 64-64 64zM448 384c0-35.300 28.700-64 64-64v64H448zm64-192c-35.300 0-64-28.700-64-64h64v64zM288 160a96 96 0 1 1 0 192 96 96 0 1 1 0-192z"/></svg><span class="t" style="left:41.46px;top:654.00px;font-size:12.2px;transform:scaleX(0.9664);color:#c2c2c2;">Sales</span><svg class="ic" style="left:173px;top:658.5px;width:9px;height:9px" viewBox="0 0 9 9"><path stroke="#9b9b9b" stroke-width="1" fill="none" d="M1 4.500h7M4.500 1v7"/></svg></li>
<li><svg class="ic" style="left:15.8px;top:707.0px;width:15.5px;height:13.9px" viewBox="0 0 512 480" preserveAspectRatio="none" ><path fill="#b3b7c2" d="M184 48H328c4.400 0 8 3.600 8 8V96H176V56c0-4.400 3.600-8 8-8zm-56 8V96v32V480H384V128 96 56c0-30.900-25.100-56-56-56H184c-30.900 0-56 25.100-56 56zM96 96H64C28.700 96 0 124.700 0 160V416c0 35.300 28.700 64 64 64H96V96zM416 480h32c35.300 0 64-28.700 64-64V160c0-35.300-28.700-64-64-64H416V480zM224 208c0-8.800 7.200-16 16-16h32c8.800 0 16 7.200 16 16v48h48c8.800 0 16 7.200 16 16v32c0 8.800-7.200 16-16 16H288v48c0 8.800-7.200 16-16 16H240c-8.800 0-16-7.200-16-16V320H176c-8.800 0-16-7.200-16-16V272c0-8.800 7.200-16 16-16h48V208z"/></svg><span class="t" style="left:39.78px;top:706.00px;font-size:12.2px;transform:scaleX(1.0237);color:#c2c2c2;">Payments</span><svg class="ic" style="left:173px;top:710.7px;width:9px;height:9px" viewBox="0 0 9 9"><path stroke="#9b9b9b" stroke-width="1" fill="none" d="M1 4.500h7M4.500 1v7"/></svg></li>
<li><svg class="ic" style="left:16.0px;top:759.1px;width:16.8px;height:14.93px" viewBox="0 0 576 512" preserveAspectRatio="none" ><path fill="#b3b7c2" d="M64 64C28.700 64 0 92.700 0 128V384c0 35.300 28.700 64 64 64H512c35.300 0 64-28.700 64-64V128c0-35.300-28.700-64-64-64H64zm64 320H64V320c35.300 0 64 28.700 64 64zM64 192V128h64c0 35.300-28.700 64-64 64zM448 384c0-35.300 28.700-64 64-64v64H448zm64-192c-35.300 0-64-28.700-64-64h64v64zM288 160a96 96 0 1 1 0 192 96 96 0 1 1 0-192z"/></svg><span class="t" style="left:41.82px;top:758.00px;font-size:12.2px;transform:scaleX(0.9831);color:#c2c2c2;">Expenses</span><svg class="ic" style="left:173px;top:762.8px;width:9px;height:9px" viewBox="0 0 9 9"><path stroke="#9b9b9b" stroke-width="1" fill="none" d="M1 4.500h7M4.500 1v7"/></svg></li>
<li><svg class="ic" style="left:15.8px;top:811.0px;width:15.4px;height:15.4px" viewBox="0 0 512 512" preserveAspectRatio="none" ><path fill="#b3b7c2" d="M32 32c17.700 0 32 14.300 32 32V400c0 8.800 7.200 16 16 16H480c17.700 0 32 14.300 32 32s-14.300 32-32 32H80c-44.200 0-80-35.800-80-80V64C0 46.300 14.300 32 32 32zM160 224c17.700 0 32 14.300 32 32v64c0 17.700-14.300 32-32 32s-32-14.300-32-32V256c0-17.700 14.300-32 32-32zm128-64V320c0 17.700-14.300 32-32 32s-32-14.300-32-32V160c0-17.700 14.300-32 32-32s32 14.300 32 32zm64 32c17.700 0 32 14.300 32 32v96c0 17.700-14.300 32-32 32s-32-14.300-32-32V224c0-17.700 14.300-32 32-32zM480 96V320c0 17.700-14.300 32-32 32s-32-14.300-32-32V96c0-17.700 14.300-32 32-32s32 14.300 32 32z"/></svg><span class="t" style="left:39.75px;top:810.00px;font-size:12.2px;transform:scaleX(1.0482);color:#c2c2c2;">Report</span><svg class="ic" style="left:173px;top:815.0px;width:9px;height:9px" viewBox="0 0 9 9"><path stroke="#9b9b9b" stroke-width="1" fill="none" d="M1 4.500h7M4.500 1v7"/></svg></li>
<li><svg class="ic" style="left:16.0px;top:862.8px;width:19.0px;height:15.2px" viewBox="0 0 640 512" preserveAspectRatio="none" ><path fill="#b3b7c2" d="M144 0a80 80 0 1 1 0 160A80 80 0 1 1 144 0zM512 0a80 80 0 1 1 0 160A80 80 0 1 1 512 0zM0 298.700C0 239.800 47.800 192 106.700 192h42.700c15.900 0 31 3.500 44.600 9.700c-1.300 7.200-1.900 14.700-1.900 22.300c0 38.200 16.800 72.500 43.300 96c-.2 0-.4 0-.7 0H21.300C9.600 320 0 310.400 0 298.700zM405.300 320c-.2 0-.4 0-.7 0c26.600-23.500 43.300-57.800 43.300-96c0-7.600-.7-15-1.900-22.300c13.600-6.300 28.700-9.700 44.600-9.700h42.700C592.200 192 640 239.800 640 298.700c0 11.800-9.600 21.300-21.300 21.300H405.300zM224 224a96 96 0 1 1 192 0 96 96 0 1 1 -192 0zM128 485.300C128 411.700 187.700 352 261.300 352H378.700C452.300 352 512 411.700 512 485.300c0 14.700-11.900 26.700-26.700 26.700H154.700c-14.700 0-26.700-11.900-26.700-26.700z"/></svg><span class="t" style="left:43.42px;top:862.00px;font-size:12.2px;transform:scaleX(1.0419);color:#c2c2c2;">Supplier</span><svg class="ic" style="left:173px;top:867.2px;width:9px;height:9px" viewBox="0 0 9 9"><path stroke="#9b9b9b" stroke-width="1" fill="none" d="M1 4.500h7M4.500 1v7"/></svg></li>
</ul></nav>
<main>
<div class="abs" style="left:236px;top:71px;width:1650px;height:488px;background:#fff"></div>
<div class="abs" style="left:236px;top:71px;width:1650px;height:50px;background:#293a37;border-radius:3px 3px 0 0"></div>
<svg class="ic" style="left:250.3px;top:84.9px;width:24.9px;height:22.1px" viewBox="0 0 576 512" preserveAspectRatio="none" ><path fill="#fff" d="M575.8 255.5c0 18-15 32.1-32 32.1h-32l.7 160.2c0 2.7-.2 5.4-.5 8.1V472c0 22.1-17.9 40-40 40H456c-1.1 0-2.2 0-3.3-.1c-1.4 .1-2.8 .1-4.2 .1H416 392c-22.1 0-40-17.9-40-40V448 384c0-17.7-14.3-32-32-32H256c-17.7 0-32 14.3-32 32v64 24c0 22.1-17.9 40-40 40H160 128.1c-1.5 0-3-.1-4.5-.2c-1.200 .1-2.400 .2-3.600 .2H104c-22.100 0-40-17.900-40-40V360c0-.9 0-1.900 .1-2.800V287.600H32c-18 0-32-14-32-32.100c0-9 3-17 10-24L266.400 8c7-7 15-8 22-8s15 2 21 7L564.800 231.500c8 7 12 15 11 24z"/></svg>
<h2><span class="t" style="left:280.16px;top:86.90px;font-size:21.5px;transform:scaleX(0.9876);color:#fff;">Livestock</span> <span class="t" style="left:375.30px;top:86.90px;font-size:21.5px;transform:scaleX(1.0292);color:#fff;">Transfer</span> <span class="t" style="left:462.63px;top:86.90px;font-size:21.5px;transform:scaleX(1.0032);color:#fff;">Lists</span></h2>
<div class="abs" style="left:1802px;top:137px;width:69px;height:30px;background:#4f51cf;border-radius:4px"></div>
<svg class="ic" style="left:1812px;top:145.8px;width:15px;height:14px" viewBox="0 0 512 512" preserveAspectRatio="none" ><path fill="#fff" d="M448 192V77.25c0-8.49-3.37-16.62-9.37-22.63L393.37 9.37c-6-6-14.14-9.37-22.63-9.37H96C78.33 0 64 14.33 64 32v160c-35.35 0-64 28.65-64 64v112c0 8.84 7.16 16 16 16h48v96c0 17.67 14.33 32 32 32h320c17.67 0 32-14.33 32-32v-96h48c8.84 0 16-7.16 16-16V256c0-35.35-28.65-64-64-64zm-64 256H128v-96h256v96zm0-224H128V64h192v48c0 8.84 7.16 16 16 16h48v96zm48 72c-13.25 0-24-10.75-24-24 0-13.26 10.75-24 24-24s24 10.74 24 24c0 13.25-10.75 24-24 24z"/></svg>
<span class="t" style="left:1829.67px;top:142.80px;font-size:14.4px;transform:scaleX(1.0423);color:#fff;">Print</span>
<section>
<article>
<div class="abs" style="left:251px;top:177px;width:382.5px;height:105px;background:#fff;border-radius:6px;box-shadow:0 1px 3px rgba(0,0,0,.30),0 0 2px rgba(0,0,0,.10)"></div>
<span class="t" style="left:281.27px;top:193.00px;font-size:14.4px;transform:scaleX(0.9846);color:#0e0e0e;">Assigned to Shed (pc)</span>
<span class="t" style="left:281.72px;top:228.50px;font-size:24.8px;transform:scaleX(0.9875);color:#0e0e0e;">50</span>
<div class="abs" style="left:559px;top:197px;width:40px;height:40px;background:#10a68f;border-radius:50%;box-shadow:0 5px 10px rgba(0,0,0,.19),0 1px 3px rgba(0,0,0,.10)"></div>
<svg class="ic" style="left:568.2px;top:208.2px;width:20.6px;height:17.9px" viewBox="0 0 576 512" preserveAspectRatio="none" ><path fill="#fff" d="M547.6 103.8L490.3 13.1C485.2 5 476.1 0 466.4 0H109.600C99.900 0 90.800 5 85.700 13.100L28.300 103.800c-29.600 46.800-3.400 111.900 51.900 119.400c4 .5 8.100 .8 12.100 .8c26.100 0 49.300-11.400 65.200-29c15.900 17.600 39.100 29 65.200 29c26.100 0 49.300-11.400 65.200-29c15.900 17.600 39.100 29 65.200 29c26.200 0 49.300-11.400 65.200-29c16 17.600 39.100 29 65.200 29c4.100 0 8.100-.3 12.100-.8c55.500-7.400 81.800-72.500 52.100-119.400zM499.700 254.900l-.1 0c-5.300 .7-10.700 1.100-16.200 1.100c-12.400 0-24.300-1.900-35.400-5.300V384H128V250.600c-11.200 3.500-23.200 5.400-35.600 5.400c-5.500 0-11-.4-16.300-1.100l-.1 0c-4.100-.6-8.100-1.300-12-2.300V384v64c0 35.300 28.700 64 64 64H448c35.300 0 64-28.700 64-64V384 252.600c-4 1-8 1.800-12.300 2.300z"/></svg>
</article>
<article>
<div class="abs" style="left:663.5px;top:177px;width:382.5px;height:105px;background:#fff;border-radius:6px;box-shadow:0 1px 3px rgba(0,0,0,.30),0 0 2px rgba(0,0,0,.10)"></div>
<span class="t" style="left:693.08px;top:193.00px;font-size:14.4px;transform:scaleX(1.0015);color:#0e0e0e;">Total Sold (pc)</span>
<span class="t" style="left:693.19px;top:228.50px;font-size:24.8px;transform:scaleX(1.0461);color:#0e0e0e;">0</span>
<div class="abs" style="left:971px;top:197px;width:40px;height:40px;background:#10a68f;border-radius:50%;box-shadow:0 5px 10px rgba(0,0,0,.19),0 1px 3px rgba(0,0,0,.10)"></div>
<svg class="ic" style="left:981px;top:207px;width:20px;height:20px" viewBox="0 0 20 20"><circle cx="10" cy="10" r="9.300" fill="#fff"/><path d="M6.200 9.900l2.800 2.800 5-5.100" fill="none" stroke="#10a68f" stroke-width="1.700"/></svg>
</article>
<article>
<div class="abs" style="left:1076px;top:177px;width:382.5px;height:105px;background:#fff;border-radius:6px;box-shadow:0 1px 3px rgba(0,0,0,.30),0 0 2px rgba(0,0,0,.10)"></div>
<span class="t" style="left:1106.07px;top:193.00px;font-size:14.4px;transform:scaleX(1.0094);color:#0e0e0e;">Total Death (pc)</span>
<span class="t" style="left:1105.72px;top:228.50px;font-size:24.8px;transform:scaleX(1.0269);color:#0e0e0e;">2</span>
<div class="abs" style="left:1384px;top:197px;width:40px;height:40px;background:#10a68f;border-radius:50%;box-shadow:0 5px 10px rgba(0,0,0,.19),0 1px 3px rgba(0,0,0,.10)"></div>
<svg class="ic" style="left:1394px;top:207px;width:20px;height:20px" viewBox="0 0 20 20"><circle cx="9.800" cy="10" r="9.300" fill="#fff"/><circle cx="6.900" cy="8.500" r="1.150" fill="#10a68f"/><circle cx="12.700" cy="8.500" r="1.150" fill="#10a68f"/><path d="M6.300 14.300c.800-1.300 2-1.900 3.500-1.900s2.700.600 3.500 1.900" fill="none" stroke="#10a68f" stroke-width="1.300" stroke-linecap="round"/></svg>
</article>
<article>
<div class="abs" style="left:1488.5px;top:177px;width:382.5px;height:105px;background:#fff;border-radius:6px;box-shadow:0 1px 3px rgba(0,0,0,.30),0 0 2px rgba(0,0,0,.10)"></div>
<span class="t" style="left:1518.37px;top:193.00px;font-size:14.4px;transform:scaleX(0.9872);color:#0e0e0e;">Available (pc)</span>
<span class="t" style="left:1518.23px;top:228.50px;font-size:24.8px;transform:scaleX(0.9948);color:#0e0e0e;">48</span>
<div class="abs" style="left:1796px;top:197px;width:40px;height:40px;background:#10a68f;border-radius:50%;box-shadow:0 5px 10px rgba(0,0,0,.19),0 1px 3px rgba(0,0,0,.10)"></div>
<svg class="ic" style="left:1804px;top:208px;width:24px;height:18px" viewBox="0 0 24 18"><g fill="#fff"><path d="M3.600 0h17.300l3.100 5.200c.300.600-.100 1.300-.800 1.300H.800C.100 6.500-.300 5.800 0 5.200z"/><path d="M2.900 6.500h2.400v7.200h6.100V6.500h2.600V17c0 .600-.400 1-1 1H3.900c-.600 0-1-.400-1-1z"/><path d="M17 10.500V8.700a3 3 0 0 1 6 0v1.800h.200c.500 0 .800.400.800.800V17c0 .600-.400 1-1 1h-6c-.600 0-1-.400-1-1v-5.700c0-.400.400-.800.800-.800zm1.600 0h2.800V8.700a1.400 1.400 0 0 0-2.800 0z"/></g></svg>
</article>
</section>
<div class="abs" style="left:251px;top:312px;width:65px;height:38px;background:#f0f1ea;border:1px solid #e3e4de;box-sizing:border-box"></div>
<span class="t" style="left:264.42px;top:320.50px;font-size:14.2px;transform:scaleX(0.9969);color:#5a5a5a;">10</span>
<svg class="ic" style="left:301px;top:327.500px;width:10px;height:8px" viewBox="0 0 10 8"><path d="M1.200 1.800l3.800 3.900 3.800-3.900" fill="none" stroke="#222" stroke-width="1.600"/></svg>
<label class="t" style="left:330.46px;top:318.80px;font-size:14.2px;transform:scaleX(1.0011);color:#484848;">records per page</label>
<label class="t" style="left:1234.37px;top:319.00px;font-size:14.2px;transform:scaleX(0.9754);color:#484848;">Search:</label>
<div class="abs" style="left:1375px;top:312px;width:496px;height:38px;background:#f0f1ea;border:1px solid #e3e4de;box-sizing:border-box"></div>
<div class="abs" style="left:251px;top:370px;width:1620px;height:97px;border:1px solid #ddd;box-sizing:border-box;background:#fff"></div>
<div class="abs" style="left:252px;top:413px;width:1618px;height:53px;background:#f9f9f9"></div>
<div class="abs" style="left:251px;top:411px;width:1620px;height:2px;background:#ddd"></div>
<div class="abs" style="left:359px;top:370px;width:1px;height:97px;background:#ddd"></div>
<div class="abs" style="left:488px;top:370px;width:1px;height:97px;background:#ddd"></div>
<div class="abs" style="left:628px;top:370px;width:1px;height:97px;background:#ddd"></div>
<div class="abs" style="left:899px;top:370px;width:1px;height:97px;background:#ddd"></div>
<div class="abs" style="left:1030px;top:370px;width:1px;height:97px;background:#ddd"></div>
<div class="abs" style="left:1186px;top:370px;width:1px;height:97px;background:#ddd"></div>
<div class="abs" style="left:1366px;top:370px;width:1px;height:97px;background:#ddd"></div>
<div class="abs" style="left:1581px;top:370px;width:1px;height:97px;background:#ddd"></div>
<table><thead><tr>
<th><span class="t" style="left:261.60px;top:380.70px;font-size:14.4px;transform:scaleX(0.9572);color:#111;font-weight:700;">SL. No.</span></th>
<th><span class="t" style="left:370.69px;top:380.70px;font-size:14.4px;transform:scaleX(0.9793);color:#111;font-weight:700;">Shed No</span><svg class="ic" style="left:474.0px;top:383px;width:8.6px;height:15.500px" viewBox="0 0 9 15.500" preserveAspectRatio="none"><path fill="#d8d8d8" d="M4.500 0 9 7H0zM0 8.600h9L4.500 15.500z"/></svg></th>
<th><span class="t" style="left:499.23px;top:380.70px;font-size:14.4px;transform:scaleX(1.0534);color:#111;font-weight:700;">Title</span><svg class="ic" style="left:614.0px;top:383px;width:8.6px;height:15.500px" viewBox="0 0 9 15.500" preserveAspectRatio="none"><path fill="#d8d8d8" d="M4.500 0 9 7H0zM0 8.600h9L4.500 15.500z"/></svg></th>
<th><span class="t" style="left:638.84px;top:380.70px;font-size:14.4px;transform:scaleX(0.9918);color:#111;font-weight:700;">Total Assigned (pc)</span><svg class="ic" style="left:885.0px;top:383px;width:8.6px;height:15.500px" viewBox="0 0 9 15.500" preserveAspectRatio="none"><path fill="#d8d8d8" d="M4.500 0 9 7H0zM0 8.600h9L4.500 15.500z"/></svg></th>
<th><span class="t" style="left:909.70px;top:380.70px;font-size:14.4px;transform:scaleX(0.9566);color:#111;font-weight:700;">Sold (pc)</span><svg class="ic" style="left:1016.0px;top:383px;width:8.6px;height:15.500px" viewBox="0 0 9 15.500" preserveAspectRatio="none"><path fill="#d8d8d8" d="M4.500 0 9 7H0zM0 8.600h9L4.500 15.500z"/></svg></th>
<th><span class="t" style="left:1040.31px;top:380.70px;font-size:14.4px;transform:scaleX(1.0265);color:#111;font-weight:700;">Death (pc)</span><svg class="ic" style="left:1172.0px;top:383px;width:8.6px;height:15.500px" viewBox="0 0 9 15.500" preserveAspectRatio="none"><path fill="#d8d8d8" d="M4.500 0 9 7H0zM0 8.600h9L4.500 15.500z"/></svg></th>
<th><span class="t" style="left:1196.84px;top:380.70px;font-size:14.4px;transform:scaleX(0.9919);color:#111;font-weight:700;">In stock (pc)</span><svg class="ic" style="left:1352.0px;top:383px;width:8.6px;height:15.500px" viewBox="0 0 9 15.500" preserveAspectRatio="none"><path fill="#d8d8d8" d="M4.500 0 9 7H0zM0 8.600h9L4.500 15.500z"/></svg></th>
<th><span class="t" style="left:1376.02px;top:380.70px;font-size:14.4px;transform:scaleX(1.0150);color:#111;font-weight:700;">Batch Running</span><svg class="ic" style="left:1567.0px;top:383px;width:8.6px;height:15.500px" viewBox="0 0 9 15.500" preserveAspectRatio="none"><path fill="#d8d8d8" d="M4.500 0 9 7H0zM0 8.600h9L4.500 15.500z"/></svg></th>
<th><span class="t" style="left:1591.60px;top:380.70px;font-size:14.4px;transform:scaleX(1.0230);color:#111;font-weight:700;">Options</span><svg class="ic" style="left:1855.5px;top:383px;width:8.6px;height:15.500px" viewBox="0 0 9 15.500" preserveAspectRatio="none"><path fill="#d8d8d8" d="M4.500 0 9 7H0zM0 8.600h9L4.500 15.500z"/></svg></th>
</tr></thead><tbody><tr>
<td><span class="t" style="left:261.26px;top:423.00px;font-size:14.4px;transform:scaleX(0.8800);color:#0e0e0e;">1</span></td>
<td><span class="t" style="left:369.81px;top:423.00px;font-size:14.4px;transform:scaleX(1.0235);color:#0e0e0e;">9900</span></td>
<td><span class="t" style="left:498.77px;top:423.00px;font-size:14.4px;transform:scaleX(0.9995);color:#0e0e0e;">Cow shed</span></td>
<td><span class="t" style="left:638.71px;top:423.00px;font-size:14.4px;transform:scaleX(1.0156);color:#0e0e0e;">50</span></td>
<td></td>
<td><span class="t" style="left:1040.49px;top:423.00px;font-size:14.4px;transform:scaleX(1.1137);color:#0e0e0e;">2</span></td>
<td><span class="t" style="left:1196.97px;top:423.00px;font-size:14.4px;transform:scaleX(1.0033);color:#0e0e0e;">48</span></td>
<td><div class="abs" style="left:1377px;top:424px;width:26px;height:30px;background:#d1ecf1;border:1px solid #bee5eb;border-radius:4px;box-sizing:border-box"></div><span class="t" style="left:1385.40px;top:429.00px;font-size:14.4px;transform:scaleX(1.0984);color:#0c5460;">2</span></td>
<td><div class="abs" style="left:1592px;top:424px;width:140px;height:30px;background:#17a2b8;border-radius:3px"></div><svg class="ic" style="left:1600.6px;top:431.4px;width:16.2px;height:14.4px" viewBox="0 0 576 512" preserveAspectRatio="none" ><path fill="#fff" d="M288 32c-80.800 0-145.500 36.800-192.600 80.600C48.600 156 17.300 208 2.500 243.700c-3.300 7.900-3.300 16.700 0 24.600C17.300 304 48.600 356 95.400 399.400C142.500 443.200 207.200 480 288 480s145.500-36.800 192.600-80.600c46.800-43.500 78.100-95.400 93-131.100c3.300-7.900 3.300-16.700 0-24.600c-14.900-35.700-46.200-87.700-93-131.100C433.500 68.800 368.800 32 288 32zM144 256a144 144 0 1 1 288 0 144 144 0 1 1 -288 0zm144-64c0 35.300-28.700 64-64 64c-7.100 0-13.900-1.200-20.300-3.300c-5.500-1.800-11.900 1.600-11.700 7.400c.3 6.900 1.300 13.800 3.200 20.700c13.700 51.200 66.400 81.600 117.600 67.900s81.600-66.400 67.900-117.600c-11.100-41.500-47.800-69.400-88.600-71.100c-5.800-.2-9.200 6.100-7.400 11.700c2.100 6.400 3.300 13.200 3.300 20.300z"/></svg><span class="t" style="left:1619.67px;top:429.00px;font-size:14.4px;transform:scaleX(1.0241);color:#fff;">Transfer Details</span></td>
</tr></tbody></table>
<p><span class="t" style="left:250.84px;top:488.00px;font-size:14.4px;transform:scaleX(1.0090);color:#0e0e0e;">Showing</span> <span class="t" style="left:309.76px;top:488.00px;font-size:14.4px;transform:scaleX(0.8800);color:#0e0e0e;">1</span> <span class="t" style="left:321.76px;top:488.00px;font-size:14.4px;transform:scaleX(1.0913);color:#0e0e0e;">to</span> <span class="t" style="left:338.61px;top:488.00px;font-size:14.4px;transform:scaleX(0.8800);color:#0e0e0e;">1</span> <span class="t" style="left:350.35px;top:488.00px;font-size:14.4px;transform:scaleX(1.0772);color:#0e0e0e;">of</span> <span class="t" style="left:367.21px;top:488.00px;font-size:14.4px;transform:scaleX(0.8800);color:#0e0e0e;">1</span> <span class="t" style="left:378.66px;top:488.00px;font-size:14.4px;transform:scaleX(1.0485);color:#0e0e0e;">entries</span></p>
<div class="abs" style="left:1697px;top:483px;width:69px;height:32px;border:1px solid #ddd;box-sizing:border-box;background:#fff"></div>
<div class="abs" style="left:1768px;top:483px;width:30px;height:32px;border:1px solid #ddd;box-sizing:border-box;background:#eee"></div>
<div class="abs" style="left:1800px;top:483px;width:70px;height:32px;border:1px solid #ddd;box-sizing:border-box;background:#fff"></div>
<a><span class="t" style="left:1704.08px;top:488.90px;font-size:14.4px;transform:scaleX(1.5389);color:#c4c4c4;">←</span> <span class="t" style="left:1725.85px;top:488.90px;font-size:14.4px;transform:scaleX(0.9768);color:#c4c4c4;">Prev</span></a>
<a><span class="t" style="left:1778.46px;top:488.90px;font-size:14.4px;transform:scaleX(0.8800);color:#6f7078;">1</span></a>
<a><span class="t" style="left:1810.57px;top:488.90px;font-size:14.4px;transform:scaleX(1.0388);color:#c4c4c4;">Next</span> <span class="t" style="left:1841.11px;top:488.90px;font-size:14.4px;transform:scaleX(1.5272);color:#c4c4c4;">→</span></a>
<svg class="ic" style="left:1470px;top:455px;width:130px;height:70px" viewBox="1470 455 130 70"><path d="M1478.6 517.4 1580 466.6" stroke="#00ff00" stroke-width="2.7" stroke-linecap="round" fill="none"/><path fill="#00ff00" d="M1590 461.6 1575.25 464.1 1578.9 467.2 1579.2 471.95z"/></svg>
</main>
</body></html>
